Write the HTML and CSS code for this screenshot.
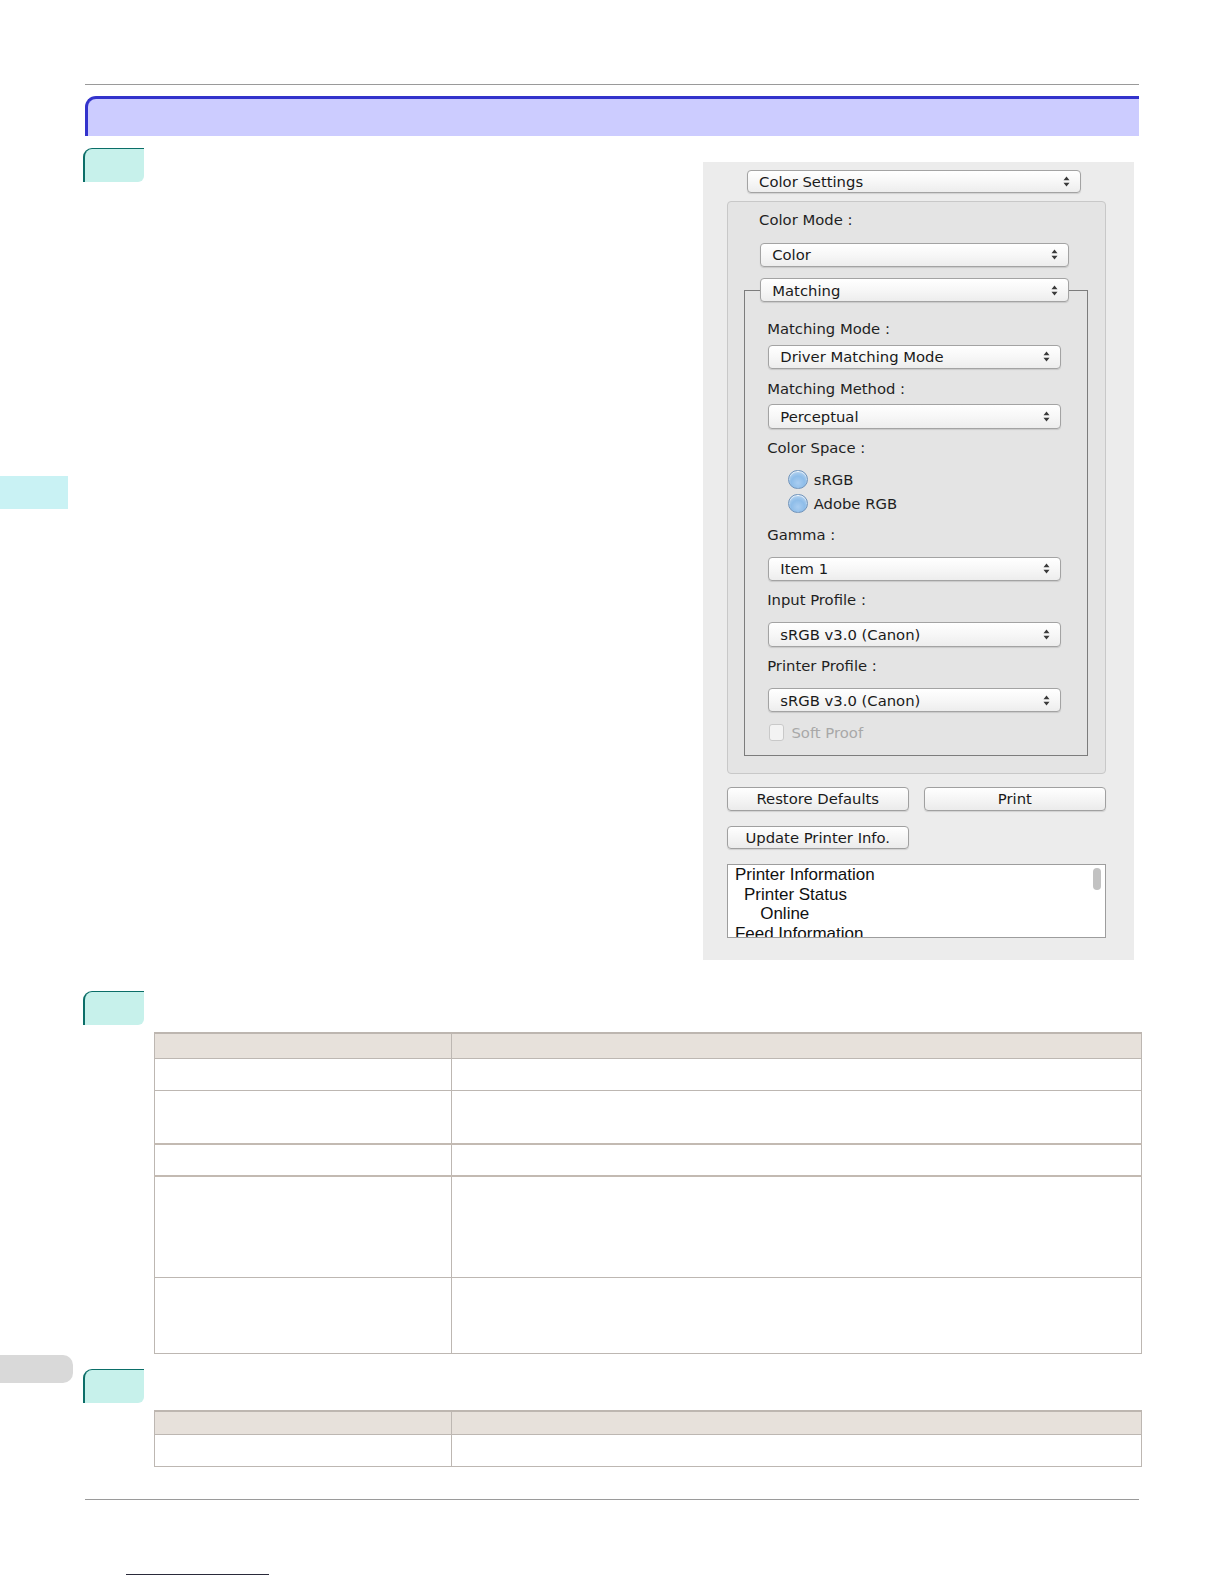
FILE: index.html
```html
<!DOCTYPE html>
<html>
<head>
<meta charset="utf-8">
<link rel="stylesheet" href="styles.css">
</head>
<body>
<div class="thumb-tab thumb-cyan"></div>
<div class="thumb-tab thumb-gray"></div>
<div class="page">
  <div class="rule"></div>
  <div class="title-bar"></div>

  <section class="step step-one">
    <div class="badge"></div>
    <div class="dialog">
      <div class="popup popup-top"><span>Color Settings</span><svg class="arrows" viewBox="0 0 7 11" width="7" height="11"><path d="M0.5 4.2 L3.5 0.6 L6.5 4.2 Z M0.5 6.8 L3.5 10.4 L6.5 6.8 Z"/></svg></div>
      <div class="group">
        <div class="label lbl-mode">Color Mode :</div>
        <div class="popup popup-mode"><span>Color</span><svg class="arrows" viewBox="0 0 7 11" width="7" height="11"><path d="M0.5 4.2 L3.5 0.6 L6.5 4.2 Z M0.5 6.8 L3.5 10.4 L6.5 6.8 Z"/></svg></div>
        <div class="fieldset">
          <div class="popup popup-legend"><span>Matching</span><svg class="arrows" viewBox="0 0 7 11" width="7" height="11"><path d="M0.5 4.2 L3.5 0.6 L6.5 4.2 Z M0.5 6.8 L3.5 10.4 L6.5 6.8 Z"/></svg></div>
          <div class="label inner-label m18">Matching Mode :</div>
          <div class="popup inner-popup m6"><span>Driver Matching Mode</span><svg class="arrows" viewBox="0 0 7 11" width="7" height="11"><path d="M0.5 4.2 L3.5 0.6 L6.5 4.2 Z M0.5 6.8 L3.5 10.4 L6.5 6.8 Z"/></svg></div>
          <div class="label inner-label m11">Matching Method :</div>
          <div class="popup inner-popup m6"><span>Perceptual</span><svg class="arrows" viewBox="0 0 7 11" width="7" height="11"><path d="M0.5 4.2 L3.5 0.6 L6.5 4.2 Z M0.5 6.8 L3.5 10.4 L6.5 6.8 Z"/></svg></div>
          <div class="label inner-label m10">Color Space :</div>
          <div class="radios">
            <div class="radio-row"><span class="radio"></span><span>sRGB</span></div>
            <div class="radio-row"><span class="radio"></span><span>Adobe RGB</span></div>
          </div>
          <div class="label inner-label m10">Gamma :</div>
          <div class="popup inner-popup m13"><span>Item 1</span><svg class="arrows" viewBox="0 0 7 11" width="7" height="11"><path d="M0.5 4.2 L3.5 0.6 L6.5 4.2 Z M0.5 6.8 L3.5 10.4 L6.5 6.8 Z"/></svg></div>
          <div class="label inner-label m10">Input Profile :</div>
          <div class="popup inner-popup m13"><span>sRGB v3.0 (Canon)</span><svg class="arrows" viewBox="0 0 7 11" width="7" height="11"><path d="M0.5 4.2 L3.5 0.6 L6.5 4.2 Z M0.5 6.8 L3.5 10.4 L6.5 6.8 Z"/></svg></div>
          <div class="label inner-label m10">Printer Profile :</div>
          <div class="popup inner-popup m13"><span>sRGB v3.0 (Canon)</span><svg class="arrows" viewBox="0 0 7 11" width="7" height="11"><path d="M0.5 4.2 L3.5 0.6 L6.5 4.2 Z M0.5 6.8 L3.5 10.4 L6.5 6.8 Z"/></svg></div>
          <div class="check-row"><span class="checkbox"></span><span>Soft Proof</span></div>
        </div>
      </div>
      <div class="button-row">
        <div class="button">Restore Defaults</div>
        <div class="button">Print</div>
      </div>
      <div class="button-row second">
        <div class="button">Update Printer Info.</div>
      </div>
      <div class="listbox">
        <div class="list-line">Printer Information</div>
        <div class="list-line ind1">Printer Status</div>
        <div class="list-line ind2">Online</div>
        <div class="list-line">Feed Information</div>
        <div class="scroll-thumb"></div>
      </div>
    </div>
  </section>

  <section class="step step-two">
    <div class="badge"></div>
    <table class="grid">
      <tr class="head h25"><td class="c1"></td><td></td></tr>
      <tr class="h32"><td class="c1"></td><td></td></tr>
      <tr class="h54"><td class="c1"></td><td></td></tr>
      <tr class="h32 thick"><td class="c1"></td><td></td></tr>
      <tr class="h101 thick"><td class="c1"></td><td></td></tr>
      <tr class="h76"><td class="c1"></td><td></td></tr>
    </table>
  </section>

  <section class="step step-three">
    <div class="badge"></div>
    <table class="grid">
      <tr class="head h24"><td class="c1"></td><td></td></tr>
      <tr class="h32"><td class="c1"></td><td></td></tr>
    </table>
  </section>

  <div class="rule rule-bottom"></div>
  <div class="footer-link"></div>
</div>
</body>
</html>
```

FILE: styles.css
```css
html, body {
  margin: 0;
  padding: 0;
  background: #ffffff;
}

body {
  position: relative;
  font-family: "DejaVu Sans", sans-serif;
}

.thumb-tab {
  position: absolute;
  left: 0;
}

.thumb-cyan {
  top: 476px;
  width: 68px;
  height: 33px;
  background: #c9f2f4;
}

.thumb-gray {
  top: 1355px;
  width: 73px;
  height: 28px;
  background: #d9d9d9;
  border-radius: 0 10px 10px 0;
}

.page {
  margin-left: 85px;
  width: 1054px;
  padding-top: 84px;
}

.rule {
  height: 1px;
  background: #9a9a9a;
}

.title-bar {
  margin-top: 11px;
  height: 37px;
  background: #ccccff;
  border-top: 3px solid #3333cc;
  border-left: 3px solid #3333cc;
  border-top-left-radius: 11px;
}

.step-one {
  margin-top: 12px;
  display: flex;
  justify-content: space-between;
  align-items: flex-start;
}

.badge {
  box-sizing: border-box;
  width: 61px;
  height: 34px;
  margin-left: -2px;
  background: #c7f1eb;
  border-top: 1px solid #0b6e68;
  border-left: 2px solid #0b6e68;
  border-top-left-radius: 9px;
  border-bottom-right-radius: 6px;
}

/* ---------- dialog ---------- */
.dialog {
  margin-top: 14px;
  margin-right: 5px;
  width: 431.5px;
  height: 798.4px;
  box-sizing: border-box;
  background: #ececec;
  padding: 8px 0 0 24.3px;
  color: #1f1f1f;
  font-size: 14.8px;
  display: flex;
  flex-direction: column;
  align-items: flex-start;
}

.popup {
  box-sizing: border-box;
  height: 24.25px;
  display: flex;
  align-items: center;
  justify-content: space-between;
  padding: 0 10px 0 11.1px;
  border: 1px solid #a3a3a3;
  border-radius: 4px;
  background: linear-gradient(#ffffff, #f7f7f7 50%, #ededed);
  box-shadow: 0 1px 1px rgba(0, 0, 0, 0.12);
  color: #1a1a1a;
  font-size: 14.8px;
  white-space: nowrap;
}

.arrows {
  fill: #3a3a3a;
  flex: none;
}

.popup-top {
  margin-left: 20.2px;
  width: 334.5px;
  height: 23.2px;
}

.group {
  margin-top: 8.1px;
  box-sizing: border-box;
  width: 379px;
  height: 573px;
  background: #e4e4e4;
  border: 1px solid #c8c8c8;
  border-radius: 4px;
  padding-top: 9.1px;
  display: flex;
  flex-direction: column;
  align-items: flex-start;
}

.label {
  height: 18.2px;
  line-height: 18.2px;
  white-space: nowrap;
}

.lbl-mode {
  margin-left: 31.3px;
}

.popup-mode {
  margin-top: 13.1px;
  margin-left: 32.3px;
  width: 309.2px;
}

.fieldset {
  margin-top: 23.2px;
  margin-left: 16.2px;
  box-sizing: border-box;
  width: 343.6px;
  height: 465.9px;
  border: 1px solid #7c7c7c;
  display: flex;
  flex-direction: column;
  align-items: flex-start;
}

.popup-legend {
  margin-top: -13.1px;
  margin-left: 15.2px;
  width: 309.2px;
}

.inner-label {
  margin-left: 22.2px;
}

.inner-popup {
  margin-left: 23.2px;
  width: 293px;
}

.m6 { margin-top: 6.1px; }
.m10 { margin-top: 10.1px; }
.m11 { margin-top: 11.1px; }
.m13 { margin-top: 13.1px; }
.m18 { margin-top: 18.2px; }

.radios {
  margin-top: 10.1px;
  margin-left: 43.5px;
  display: flex;
  flex-direction: column;
}

.radio-row {
  height: 24.25px;
  display: flex;
  align-items: center;
  gap: 6px;
}

.radio {
  box-sizing: border-box;
  width: 19.2px;
  height: 19.2px;
  border-radius: 50%;
  border: 1px solid #6f93bb;
  background: radial-gradient(circle at 50% 70%, #a9cdf1 0%, #8ebde9 45%, #c9def3 100%);
  box-shadow: inset 0 1px 1px rgba(255, 255, 255, 0.8);
}

.check-row {
  margin-top: 11.1px;
  margin-left: 24.3px;
  height: 18.2px;
  display: flex;
  align-items: center;
  gap: 7px;
  color: #a8a8a8;
}

.checkbox {
  box-sizing: border-box;
  width: 15.2px;
  height: 16.2px;
  border: 1px solid #c9c9c9;
  border-radius: 3px;
  background: #f3f3f3;
}

.button-row {
  margin-top: 13.1px;
  display: flex;
  gap: 15.2px;
}

.button-row.second {
  margin-top: 15.2px;
}

.button {
  box-sizing: border-box;
  width: 181.9px;
  height: 23.2px;
  line-height: 21.2px;
  text-align: center;
  border: 1px solid #a0a0a0;
  border-radius: 4px;
  background: linear-gradient(#ffffff, #f4f4f4 55%, #ebebeb);
  box-shadow: 0 1px 1px rgba(0, 0, 0, 0.12);
  color: #1a1a1a;
  font-size: 14.8px;
}

.listbox {
  position: relative;
  margin-top: 15.2px;
  box-sizing: border-box;
  width: 379px;
  height: 73.8px;
  background: #ffffff;
  border: 1px solid #9d9d9d;
  overflow: hidden;
  padding: 0 0 0 7.1px;
  font-family: "Liberation Sans", Arial, sans-serif;
  font-size: 17px;
  color: #111111;
}

.list-line {
  height: 19.6px;
  line-height: 19.6px;
  white-space: nowrap;
}

.ind1 { padding-left: 9.1px; }
.ind2 { padding-left: 25.3px; }

.scroll-thumb {
  position: absolute;
  top: 3px;
  right: 4px;
  width: 8px;
  height: 22px;
  border-radius: 4px;
  background: #c2c2c2;
}

/* ---------- tables ---------- */
.step-two {
  margin-top: 31px;
}

.step-three {
  margin-top: 15px;
}

.grid {
  margin-top: 7px;
  margin-left: 69px;
  width: 988px;
  border-collapse: collapse;
  table-layout: fixed;
}

.grid td {
  border: 1px solid #bdb7b2;
  padding: 0;
}

.grid .c1 {
  width: 296px;
}

.grid .head td {
  background: #e7e1db;
  border-top: 2px solid #bdb6b0;
}

.grid .thick td {
  border-top: 2px solid #c3bab2;
}

.h24 { height: 24px; }
.h25 { height: 25px; }
.h32 { height: 32px; }
.h54 { height: 54px; }
.h76 { height: 76px; }
.h101 { height: 101px; }

.rule-bottom {
  margin-top: 32px;
}

.footer-link {
  margin-top: 74px;
  margin-left: 41px;
  width: 143px;
  height: 1px;
  background: #2a2a3a;
}
```
